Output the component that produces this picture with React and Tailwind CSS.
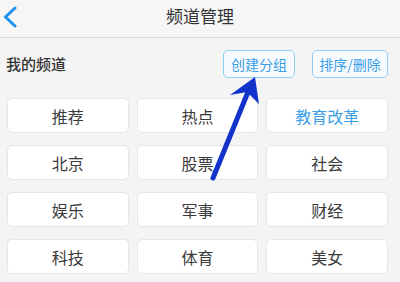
export default function App() {
  const channels = ['推荐', '热点', '教育改革', '北京', '股票', '社会', '娱乐', '军事', '财经', '科技', '体育', '美女']

  return (
    <div className="relative w-[400px] h-[282px] overflow-hidden bg-[#f4f4f4]" style={{ fontFamily: '"Noto Sans CJK SC", "Noto Sans", sans-serif' }}>
      <div className="relative h-[38px] bg-[#f6f6f6] border-b border-[#d8d8d8] flex items-center justify-center">
        <svg className="absolute left-[2px] top-[6px]" width="16" height="22" viewBox="0 0 16 22">
          <path d="M13 2 L3.5 11 L13 20" fill="none" stroke="#1e90f0" strokeWidth="3" strokeLinecap="round" strokeLinejoin="round" />
        </svg>
        <span className="text-[17px] text-[#333] -mt-[6px]">频道管理</span>
      </div>

      <div className="flex items-center h-[40px] mt-[6px] px-[6px]">
        <span className="text-[15px] text-[#333] font-medium">我的频道</span>
        <div className="ml-auto flex gap-[17px] mr-[6px]">
          <button className="w-[72px] h-[28px] border border-[#90cdf2] rounded-[5px] text-[14px] text-[#3a9fe6] bg-[#f7fbfe]">创建分组</button>
          <button className="w-[76px] h-[28px] border border-[#90cdf2] rounded-[5px] text-[14px] text-[#3a9fe6] bg-[#f7fbfe]">排序/删除</button>
        </div>
      </div>

      <div className="grid grid-cols-3 gap-x-[8px] gap-y-[12px] px-[7px] mt-[14px] w-[395px]">
        {channels.map(c => (
          <div key={c} className={`h-[35px] bg-white border border-[#e6e6e6] rounded-[5px] flex items-center justify-center text-[16px] ${c === '教育改革' ? 'text-[#3a9fe6]' : 'text-[#3a3a3a]'}`}>
            {c}
          </div>
        ))}
      </div>

      <svg className="absolute left-0 top-0 pointer-events-none" width="400" height="282" viewBox="0 0 400 282">
        <line x1="213" y1="178" x2="248" y2="92" stroke="#1133cc" strokeWidth="5" strokeLinecap="round" />
        <path d="M255 77 L230 95 L247 92 L259 104 Z" fill="#1133cc" />
      </svg>
    </div>
  )
}
